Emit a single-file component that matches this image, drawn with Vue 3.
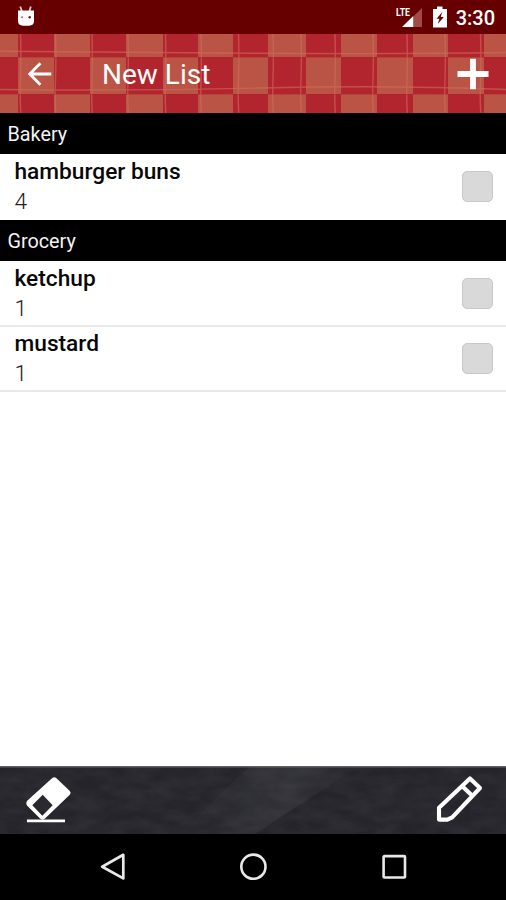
<script setup>
import { ref } from 'vue'

const sections = ref([
  { name: 'Bakery', items: [{ name: 'hamburger buns', qty: 4, done: false }] },
  {
    name: 'Grocery',
    items: [
      { name: 'ketchup', qty: 1, done: false },
      { name: 'mustard', qty: 1, done: false },
    ],
  },
])

// Column edges of the gingham cloth; cells alternate along each row.
const edges = [0, 18, 54, 90, 126, 163, 198, 233, 268, 306, 341, 377, 413, 448, 484, 506]
const rows = [
  { y: 0, h: 23, odd: 0 },
  { y: 23, h: 37, odd: 1 },
  { y: 60, h: 19, odd: 0 },
]
const cells = rows.flatMap((r) =>
  edges.slice(0, -1).map((x, i) => ({ x, y: r.y, w: edges[i + 1] - x, h: r.h, tan: i % 2 === r.odd })),
).filter((c) => c.tan)
const threads = [20.5, 55.5, 92, 128, 165.5, 201, 238.5, 273, 301, 335, 373, 407, 445, 480.5]
</script>

<template>
  <div class="screen">
    <header class="status">
      <svg class="debug" viewBox="0 0 18 22" width="18" height="22">
        <path d="M3.2 .5 5 5.5M13.8 .5 12.4 5.5" stroke="#e8c8c0" stroke-width="1.8" />
        <path d="M1 4.6h16v10.5q0 4.5-5 4.7h-6q-5-.2-5-4.7z" fill="#fff" />
        <circle cx="5" cy="11.2" r="1" fill="#927078" />
        <circle cx="12.7" cy="11.2" r="1.2" fill="#700f28" />
      </svg>
      <div class="indicators">
        <svg viewBox="0 0 28 22" width="28" height="22">
          <path d="M26 2v19H16.8V11z" fill="#a04a4a" />
          <path d="M17.2 10V21H6z" fill="#fff" />
          <text x="0" y="9.8" class="lte" textLength="14" lengthAdjust="spacingAndGlyphs">LTE</text>
        </svg>
        <svg class="battery" viewBox="0 0 16 22" width="16" height="22">
          <path d="M5 .5h5.5V3H15v18.5H1V3h4z" fill="#fff" />
          <path d="M10.3 6 4.5 12.7h3L5.8 18l6-7H8.7z" fill="#660000" />
        </svg>
        <span class="clock">3:30</span>
      </div>
    </header>

    <div class="toolbar">
      <svg class="cloth" viewBox="0 0 506 79" width="506" height="79">
        <rect width="506" height="79" fill="#b3252e" />
        <rect v-for="(c, i) in cells" :key="i" :x="c.x" :y="c.y" :width="c.w" :height="c.h" fill="#ba5445" />
        <g fill="none" stroke="#d4705f" stroke-width="1.4" opacity=".55">
          <path v-for="(x, i) in threads" :key="i" :d="`M${x} 0q.7 25 0 45t.3 34`" />
          <path d="M0 17.2Q110 18 250 19.2T506 18.5M0 55.5Q130 57 260 54T506 55.5" />
        </g>
        <path d="M0 23.5H506M0 60.5H506" stroke="#9f2029" opacity=".3" />
      </svg>
      <div class="toolbar-content">
        <svg class="back" viewBox="0 0 24 24" width="24" height="24">
          <path d="M23.3 12H2M12.4 1.3 1.8 12 12.4 22.7" fill="none" stroke="#fff" stroke-width="2.8" />
        </svg>
        <h1>New List</h1>
        <svg class="add" viewBox="0 0 32 32" width="32" height="32">
          <path d="M16 .7v30.6M.5 16h31" stroke="#fff" stroke-width="5.8" />
        </svg>
      </div>
    </div>

    <main>
      <section v-for="s in sections" :key="s.name">
        <h2>{{ s.name }}</h2>
        <div v-for="item in s.items" :key="item.name" class="item">
          <div class="label">
            <div class="name">{{ item.name }}</div>
            <div class="qty">{{ item.qty }}</div>
          </div>
          <button class="check" @click="item.done = !item.done"></button>
        </div>
      </section>
    </main>

    <footer class="actions">
      <svg class="slate" viewBox="0 0 506 68" width="506" height="68">
        <defs>
          <filter id="chalk" x="0" y="0" width="100%" height="100%">
            <feTurbulence type="fractalNoise" baseFrequency="0.04 0.09" numOctaves="5" seed="9" />
            <feColorMatrix values="0 0 0 0 .5  0 0 0 0 .5  0 0 0 0 .55  .8 0 0 0 -.2" />
          </filter>
          <linearGradient id="smear" x1="0" y1="0" x2="1" y2="0">
            <stop offset="0" stop-color="#45454c" stop-opacity="0" />
            <stop offset=".6" stop-color="#45454c" stop-opacity=".4" />
            <stop offset="1" stop-color="#45454c" stop-opacity="0" />
          </linearGradient>
        </defs>
        <rect width="506" height="68" fill="#24242a" />
        <path d="M180 68 250 0H360L310 32 270 58 255 68z" fill="url(#smear)" />
        <rect width="506" height="68" filter="url(#chalk)" opacity=".15" />
        <path d="M0 .7H506" stroke="#606066" stroke-width="1.5" />
      </svg>
      <div class="action-icons">
        <svg viewBox="0 0 48 48" width="48" height="48">
          <path fill-rule="evenodd" fill="#fff" d="M28.3 3q2-1.6 3.9 0l13.6 13q1.7 1.8 0 3.7L21 43.6q-2.5 2.2-5 0L3.2 30.7q-1.8-2.2 0-4.9zM18.7 19.8 8.3 30.3 18.3 40.7 28.7 30.3z" />
          <path d="M3 45.8H41" stroke="#fff" stroke-width="2.8" />
        </svg>
        <svg viewBox="0 0 48 48" width="48" height="48">
          <path d="M4 44.6V32.8L35 3.4 45 13 17.2 42.3 12.3 44.6zM27 11 37.5 21" fill="none" stroke="#fff" stroke-width="4.1" stroke-linejoin="round" />
        </svg>
      </div>
    </footer>

    <nav>
      <svg viewBox="0 0 28 28" width="28" height="28">
        <path d="M24.3 1.8V25.4L3.2 13.7z" fill="none" stroke="#e9e9e9" stroke-width="2.7" stroke-linejoin="round" />
      </svg>
      <svg viewBox="0 0 28 28" width="28" height="28">
        <circle cx="14.4" cy="13.7" r="12.1" fill="none" stroke="#e9e9e9" stroke-width="2.6" />
      </svg>
      <svg viewBox="0 0 28 28" width="28" height="28">
        <rect x="3.6" y="3.1" width="21.4" height="21.4" rx=".8" fill="none" stroke="#e9e9e9" stroke-width="2.6" />
      </svg>
    </nav>
  </div>
</template>

<style>
body { margin: 0; }
</style>

<style scoped>
.screen {
  width: 506px;
  height: 900px;
  display: flex;
  flex-direction: column;
  overflow: hidden;
  background: #fff;
  font-family: Roboto, sans-serif;
}
svg { display: block; flex: none; }
.status {
  height: 34px;
  flex: none;
  box-sizing: border-box;
  background: #660000;
  display: flex;
  justify-content: space-between;
  padding: 6px 11px 0 17px;
}
.indicators { display: flex; color: #fff; }
.lte { font: 700 11.5px Roboto, sans-serif; fill: #fff; }
.battery { margin: 0 8px 0 8px; }
.clock { font-size: 20px; line-height: 24px; font-weight: 500; }
.toolbar { height: 79px; flex: none; display: grid; }
.cloth, .toolbar-content, .slate, .action-icons { grid-area: 1 / 1; }
.toolbar-content {
  display: flex;
  align-items: center;
  padding: 0 17px 0 28px;
  position: relative;
}
h1 {
  flex: 1;
  margin: 2px 0 0 50px;
  color: #fff;
  font-size: 28px;
  line-height: 32px;
  font-weight: 400;
}
main { flex: 1; }
h2 {
  margin: 0;
  height: 41px;
  line-height: 43px;
  padding-left: 7.5px;
  background: #000;
  color: #f3f3f3;
  font-size: 19.8px;
  font-weight: 400;
}
.item {
  height: 66px;
  box-sizing: border-box;
  display: flex;
  justify-content: space-between;
  border-bottom: 2px solid #e9e9e9;
  padding: 2px 13px 0 14.5px;
}
.item + .item { height: 65px; padding-top: 1px; }
section:first-child .item { border-bottom: 0; }
.name { font-size: 22.7px; line-height: 31px; font-weight: 500; color: #080808; }
.qty { font-size: 22.6px; line-height: 30px; font-weight: 300; color: #222; }
.check {
  width: 31px;
  height: 31px;
  margin: 15px 0 0;
  padding: 0;
  border: 1.5px solid #c8c8c8;
  border-radius: 5px;
  background: #d9d9d9;
}
.actions { height: 68px; flex: none; display: grid; }
.action-icons {
  display: flex;
  justify-content: space-between;
  padding: 9px 23px 0 24px;
  position: relative;
}
nav {
  height: 66px;
  flex: none;
  background: #000;
  display: flex;
  justify-content: center;
  align-items: center;
  gap: 112.5px;
}
</style>
